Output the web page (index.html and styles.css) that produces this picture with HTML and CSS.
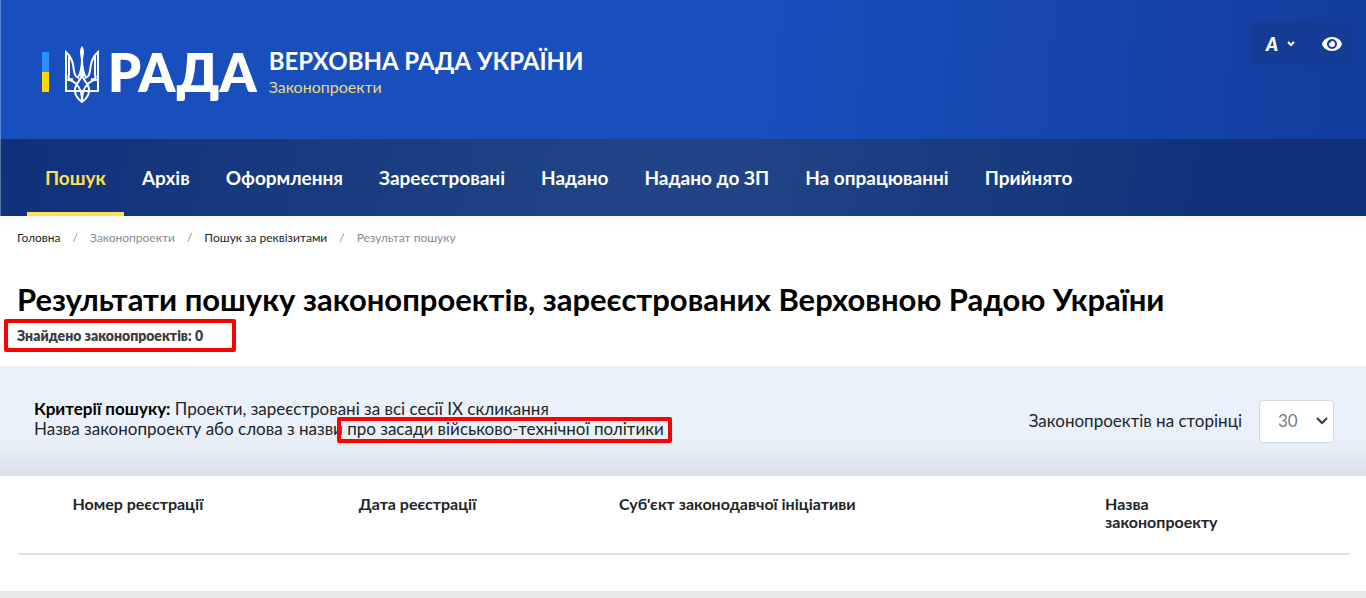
FILE: index.html
```html
<!DOCTYPE html>
<html lang="uk">
<head>
<meta charset="utf-8">
<meta name="viewport" content="width=device-width, initial-scale=1">
<title>Результати пошуку законопроектів</title>
<link rel="stylesheet" href="styles.css">
</head>
<body>
<header class="banner">
  <a class="brand" href="#">
    <span class="flag"></span>
    <svg class="trident" viewBox="0 0 36 57" aria-hidden="true">
      <g fill="none" stroke="#fff" stroke-width="2" stroke-linejoin="miter">
        <path d="M11 45H2V6C8 11 9 17 10 25C11 30 12 31 15 32M25 45H34V6C28 11 27 17 26 25C25 30 24 31 21 32"/>
        <path d="M5 10V29C3 32 6 34 9 33M31 10V29C33 32 30 34 27 33M2 34H6M34 34H30"/>
        <path d="M18 29C17 35 10 38 11 45C11 50 14 53 18 56C22 53 25 50 25 45C26 38 19 35 18 29M6 34C13 37 18 42 18 55C18 42 23 37 30 34M11 45H25"/>
      </g>
      <path fill="#fff" d="M18 0C15 4 16 7 17 13C17 20 16 26 13 32L18 29L23 32C20 26 19 20 19 13C20 7 21 4 18 0Z"/>
    </svg>
    <span class="wordmark">РАДА</span>
    <span class="brand-text">
      <span class="brand-name">ВЕРХОВНА РАДА УКРАЇНИ</span>
      <span class="brand-section">Законопроекти</span>
    </span>
  </a>
  <div class="tools">
    <button class="tool" type="button" aria-label="Розмір шрифту">
      <span class="letter">A</span>
      <svg width="8" height="6" viewBox="0 0 8 6" aria-hidden="true"><path d="M1 1L4 4L7 1" fill="none" stroke="#fff" stroke-width="2"/></svg>
    </button>
    <button class="tool" type="button" aria-label="Версія для слабозорих">
      <svg width="22" height="16" viewBox="0 0 22 16" aria-hidden="true">
        <path fill="#fff" d="M11 1C6 1 2 4 1 8C2 12 6 15 11 15S20 12 21 8C20 4 16 1 11 1Z"/>
        <circle cx="11" cy="8" r="4" fill="none" stroke="#143c96" stroke-width="2"/>
        <circle cx="9" cy="6" r="1" fill="#143c96"/>
      </svg>
    </button>
  </div>
</header>
<nav class="menu">
  <a class="active" href="#">Пошук</a>
  <a href="#">Архів</a>
  <a href="#">Оформлення</a>
  <a href="#">Зареєстровані</a>
  <a href="#">Надано</a>
  <a href="#">Надано до ЗП</a>
  <a href="#">На опрацюванні</a>
  <a href="#">Прийнято</a>
</nav>
<main>
  <div class="intro">
    <ol class="crumbs">
      <li><a href="#">Головна</a></li>
      <li>Законопроекти</li>
      <li><a href="#">Пошук за реквізитами</a></li>
      <li>Результат пошуку</li>
    </ol>
    <h1>Результати пошуку законопроектів, зареєстрованих Верховною Радою України</h1>
    <p class="found"><span class="mark mark-found">Знайдено законопроектів: 0</span></p>
  </div>
  <section class="criteria">
    <p><strong>Критерії пошуку:</strong> Проекти, зареєстровані за всі сесії IX скликання<br>Назва законопроекту або слова з назви <span class="mark mark-query">про засади військово-технічної політики</span></p>
    <div class="per-page">
      <label for="per-page">Законопроектів на сторінці</label>
      <select id="per-page"><option>30</option><option>50</option><option>100</option></select>
    </div>
  </section>
  <section class="results">
    <table>
      <thead>
        <tr>
          <th class="number" scope="col">Номер реєстрації</th>
          <th class="date" scope="col">Дата реєстрації</th>
          <th class="subject" scope="col">Суб'єкт законодавчої ініціативи</th>
          <th class="name" scope="col">Назва<br>законопроекту</th>
        </tr>
      </thead>
    </table>
  </section>
</main>
</body>
</html>
```
FILE: styles.css
```css
* { box-sizing: border-box; }
body {
  margin: 0;
  background: #e9e9e9;
  color: #212529;
  font: 16px/18px Lato, "Open Sans", sans-serif;
}
a { color: inherit; text-decoration: none; }

.banner {
  display: flex;
  align-items: flex-start;
  justify-content: space-between;
  min-height: 139px;
  padding: 22px 14px 0 42px;
  background: linear-gradient(95deg, #194ebd 0%, #194ebd 56%, #123d9c 100%);
  box-shadow: inset 1px 0 #5c83d2;
  color: #fff;
}
.brand { display: flex; align-items: center; padding-top: 18px; }
.flag {
  width: 7px;
  height: 40px;
  margin-right: 15px;
  background: linear-gradient(#2e8fff 50%, #ffd800 50%);
}
.trident { width: 36px; height: 57px; margin-top: 6px; }
.wordmark { margin-left: 8px; font-size: 52px; font-weight: 800; line-height: 56px; }
.brand-text { display: flex; flex-direction: column; gap: 4px; margin-left: 12px; }
.brand-name { font-size: 24px; font-weight: 700; line-height: 26px; }
.brand-section { color: #e8d983; font-size: 16px; line-height: 18px; }

.tools { display: flex; height: 43px; background: #143c96; }
.tool {
  display: flex;
  align-items: center;
  gap: 9px;
  padding: 0 9px 0 14px;
  border: 0;
  background: none;
  color: #fff;
}
.tool + .tool { padding-left: 17px; }
.letter { font: italic 800 18px/20px Lato, sans-serif; }

.menu {
  display: flex;
  padding-left: 27px;
  background: linear-gradient(100deg, #10317a 0%, #204485 45%, #204485 54%, #10317a 90%);
  box-shadow: inset 1px 0 #5b74a8;
  color: #fff;
  font-size: 19px;
  font-weight: 700;
  line-height: 24px;
}
.menu a { padding: 27px 18px 22px; border-bottom: 4px solid transparent; }
.menu .active { border-color: #ffdf56; color: #ffdf56; }

main { background: #fff; }
.intro { padding: 13px 17px 14px; background: linear-gradient(#f8f8f8, #fff 12px); }
.crumbs {
  display: flex;
  margin: 0 0 34px;
  padding: 0;
  color: #868b90;
  font-size: 12px;
  line-height: 18px;
  list-style: none;
}
.crumbs a { color: #212529; }
.crumbs li + li::before { content: "/"; padding: 0 12px; color: #868b90; }
h1 { margin: 0; color: #000; font-size: 31px; font-weight: 700; line-height: 36px; }
.found { margin: 10px 0 7px; color: #3a3d42; font-size: 14px; font-weight: 800; line-height: 18px; }

.mark { position: relative; }
.mark::after { position: absolute; border: 4px solid #f00; border-radius: 2px; content: ""; }
.mark-found::after { inset: -8px -33px -8px -13px; }
.mark-query::after { inset: -1px -8px -4px -10px; }

.criteria {
  display: flex;
  align-items: center;
  justify-content: space-between;
  min-height: 110px;
  padding: 0 32px 0 34px;
  background: linear-gradient(#eaf1fa 55%, #e6edf5 75%, #dbe1ea);
  font-size: 17px;
  line-height: 20px;
}
.criteria p { margin: 0; padding-bottom: 4px; }
.criteria strong { color: #000; font-weight: 700; }
.per-page { display: flex; align-items: center; gap: 17px; }
.per-page select {
  appearance: none;
  width: 75px;
  height: 43px;
  padding: 0 18px;
  border: 1px solid #d4dae1;
  border-radius: 4px;
  background: #fff url("data:image/svg+xml,%3Csvg xmlns='http://www.w3.org/2000/svg' width='12' height='8'%3E%3Cpath d='M1 1L6 6L11 1' fill='none' stroke='%23343a40' stroke-width='2'/%3E%3C/svg%3E") no-repeat right 5px center;
  color: #767b80;
  font: 17px/24px Lato, sans-serif;
}

.results { padding: 0 16px 36px 18px; }
table { width: 100%; border-collapse: collapse; table-layout: fixed; }
th {
  padding: 19px 12px 22px;
  border-bottom: 2px solid #dee2e6;
  font-weight: 700;
  text-align: left;
  vertical-align: top;
}
.number { width: 18%; text-align: center; }
.date { width: 24%; text-align: center; }
.subject { width: 24%; text-align: center; }
.name { padding-left: 208px; }
```
